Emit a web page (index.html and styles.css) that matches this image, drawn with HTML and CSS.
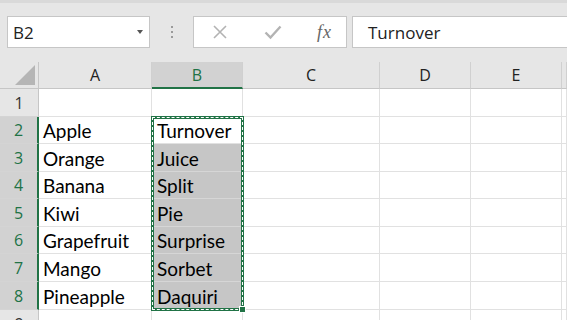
FILE: index.html
```html
<!DOCTYPE html>
<html>
    <head>
        <title>Sheet</title>
        <link rel="stylesheet" href="styles.css">
    </head>
    <body>
        <div class="toolbar">
            <div class="namebox">
                <span>B2</span>
                <span class="caret"></span>
            </div>
            <div class="grip"><i></i><i></i><i></i></div>
            <div class="fxbox">
                <svg class="btn" width="16" height="16" viewBox="0 0 16 16"><path d="M2 2 L14 14 M14 2 L2 14" stroke="#b3b3b3" stroke-width="1.6" fill="none"/></svg>
                <svg class="btn" width="18" height="16" viewBox="0 0 18 16"><path d="M1.5 8.5 L6.5 13.5 L16.5 2.5" stroke="#b3b3b3" stroke-width="2.4" fill="none"/></svg>
                <span class="fx">fx</span>
            </div>
            <div class="formula">Turnover</div>
        </div>
        <div class="sheet">
            <div class="corner"><span></span></div>
            <div class="colhead">A</div>
            <div class="colhead sel">B</div>
            <div class="colhead">C</div>
            <div class="colhead">D</div>
            <div class="colhead">E</div>
            <div class="colhead"></div>

            <div class="rowhead">1</div>
            <div class="cell"></div>
            <div class="cell"></div>
            <div class="cell"></div>
            <div class="cell"></div>
            <div class="cell"></div>
            <div class="cell"></div>

            <div class="rowhead sel">2</div>
            <div class="cell">Apple</div>
            <div class="cell active">Turnover</div>
            <div class="cell"></div>
            <div class="cell"></div>
            <div class="cell"></div>
            <div class="cell"></div>

            <div class="rowhead sel">3</div>
            <div class="cell">Orange</div>
            <div class="cell picked">Juice</div>
            <div class="cell"></div>
            <div class="cell"></div>
            <div class="cell"></div>
            <div class="cell"></div>

            <div class="rowhead sel">4</div>
            <div class="cell">Banana</div>
            <div class="cell picked">Split</div>
            <div class="cell"></div>
            <div class="cell"></div>
            <div class="cell"></div>
            <div class="cell"></div>

            <div class="rowhead sel">5</div>
            <div class="cell">Kiwi</div>
            <div class="cell picked">Pie</div>
            <div class="cell"></div>
            <div class="cell"></div>
            <div class="cell"></div>
            <div class="cell"></div>

            <div class="rowhead sel">6</div>
            <div class="cell">Grapefruit</div>
            <div class="cell picked">Surprise</div>
            <div class="cell"></div>
            <div class="cell"></div>
            <div class="cell"></div>
            <div class="cell"></div>

            <div class="rowhead sel">7</div>
            <div class="cell">Mango</div>
            <div class="cell picked">Sorbet</div>
            <div class="cell"></div>
            <div class="cell"></div>
            <div class="cell"></div>
            <div class="cell"></div>

            <div class="rowhead sel">8</div>
            <div class="cell">Pineapple</div>
            <div class="cell picked">Daquiri</div>
            <div class="cell"></div>
            <div class="cell"></div>
            <div class="cell"></div>
            <div class="cell"></div>

            <div class="rowhead">9</div>
            <div class="cell"></div>
            <div class="cell"></div>
            <div class="cell"></div>
            <div class="cell"></div>
            <div class="cell"></div>
            <div class="cell"></div>

            <div class="marquee"><span class="handle"></span></div>
        </div>
    </body>
</html>
```

FILE: styles.css
```css
body {
    margin: 0;
    width: 567px;
    height: 320px;
    overflow: hidden;
    background: #e6e6e6;
    font-family: "Open Sans", "Noto Sans", sans-serif;
}
.toolbar {
    height: 62px;
    box-sizing: border-box;
    border-top: 3px solid #d9d9d9;
    padding: 13px 0 0 7px;
    display: flex;
    align-items: flex-start;
}
.namebox {
    width: 143px;
    height: 32px;
    box-sizing: border-box;
    background: #fff;
    border: 1px solid #c6c6c6;
    display: flex;
    align-items: center;
    justify-content: space-between;
    padding: 0 6px 0 5px;
    font-size: 17px;
    color: #222;
}
.caret {
    width: 0;
    height: 0;
    border-left: 3.5px solid transparent;
    border-right: 3.5px solid transparent;
    border-top: 4px solid #555;
}
.grip {
    width: 43px;
    height: 32px;
    display: flex;
    flex-direction: column;
    align-items: center;
    justify-content: center;
    gap: 3px;
}
.grip i {
    width: 2px;
    height: 2px;
    background: #9a9a9a;
}
.fxbox {
    width: 154px;
    height: 32px;
    box-sizing: border-box;
    background: #fff;
    border: 1px solid #c6c6c6;
    display: flex;
    align-items: center;
    padding: 0 14px 0 18px;
    justify-content: space-between;
}
.fx {
    font-family: "Liberation Serif", serif;
    font-style: italic;
    font-size: 18px;
    color: #666;
    letter-spacing: 1px;
}
.formula {
    flex: 1;
    margin-left: 5px;
    height: 32px;
    box-sizing: border-box;
    background: #fff;
    border: 1px solid #c6c6c6;
    border-right: none;
    padding-left: 15px;
    display: flex;
    align-items: center;
    font-size: 17px;
    color: #222;
}
.sheet {
    position: relative;
    display: grid;
    grid-template-columns: 39px 113px 91px 137px 91px 91px 1fr;
    grid-template-rows: 27px 28px 27px 28px 27px 28px 27px 28px 28px 28px;
    background: #fff;
}
.corner {
    background: #e6e6e6;
    border-right: 1px solid #c6c6c6;
    border-bottom: 1px solid #c6c6c6;
    position: relative;
}
.corner span {
    position: absolute;
    right: 3px;
    bottom: 3px;
    width: 20px;
    height: 20px;
    background: #b5b5b5;
    clip-path: polygon(100% 0, 100% 100%, 0 100%);
}
.colhead {
    background: #e6e6e6;
    border-right: 1px solid #d0d0d0;
    border-bottom: 1px solid #c6c6c6;
    display: flex;
    align-items: center;
    justify-content: center;
    font-size: 16px;
    color: #222;
}
.colhead.sel {
    background: #d2d2d2;
    border-bottom: 2px solid #217346;
    color: #217346;
}
.rowhead {
    background: #e6e6e6;
    border-right: 1px solid #c6c6c6;
    border-bottom: 1px solid #d4d4d4;
    display: flex;
    align-items: center;
    justify-content: center;
    font-size: 16px;
    color: #333;
}
.rowhead.sel {
    background: #d2d2d2;
    border-right: 2px solid #217346;
    color: #217346;
}
.cell {
    border-right: 1px solid #e1e1e1;
    border-bottom: 1px solid #e1e1e1;
    padding: 1px 0 0 4px;
    display: flex;
    align-items: center;
    font-family: "Lato", "Liberation Sans", sans-serif;
    font-size: 19px;
    color: #000;
    white-space: nowrap;
    overflow: hidden;
}
.cell.active {
    padding-left: 5px;
}
.cell.picked {
    background: #c6c6c6;
    border-bottom-color: #d6d6d6;
    padding-left: 5px;
}
/* copy marquee sits over B2:B8 */
.marquee {
    position: absolute;
    grid-column: 3 / 4;
    grid-row: 3 / 10;
    inset: -1px;
    border: 3px solid #217346;
    pointer-events: none;
}
.marquee::after {
    content: "";
    position: absolute;
    inset: -2px;
    border: 1px dashed #fff;
}
.handle {
    position: absolute;
    right: -5px;
    bottom: -5px;
    width: 5px;
    height: 5px;
    background: #217346;
    border: 1px solid #fff;
    z-index: 1;
}
```
